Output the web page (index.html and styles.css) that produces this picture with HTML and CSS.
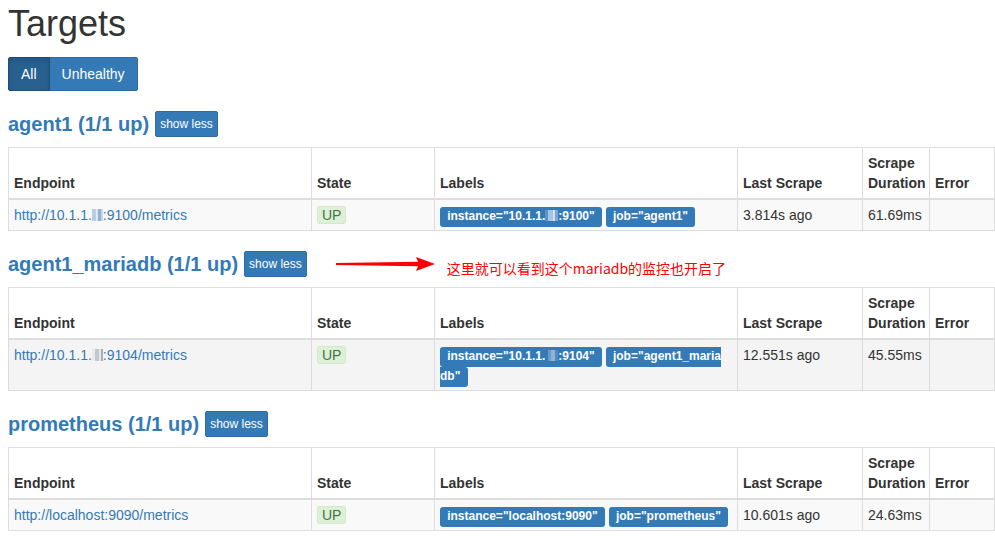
FILE: index.html
```html
<!DOCTYPE html>
<html lang="en">
<head>
<meta charset="utf-8">
<title>Targets</title>
<link rel="stylesheet" href="styles.css">
</head>
<body>
<div class="page">
  <h1 class="title">Targets</h1>
  <div class="filter">
    <button class="btn btn-first active">All</button><button class="btn btn-last">Unhealthy</button>
  </div>

  <section class="job">
    <div class="job-head">
      <h2 class="job-title">agent1 (1/1 up)</h2>
      <button class="btn-sm">show less</button>
    </div>
    <table class="targets">
      <colgroup><col class="c-end"><col class="c-state"><col class="c-labels"><col class="c-last"><col class="c-dur"><col></colgroup>
      <thead>
        <tr><th>Endpoint</th><th>State</th><th>Labels</th><th>Last Scrape</th><th>Scrape Duration</th><th>Error</th></tr>
      </thead>
      <tbody>
        <tr>
          <td><a class="ep" href="#">http://10.1.1.<span class="blur blur-ep"></span>:9100/metrics</a></td>
          <td><span class="up">UP</span></td>
          <td><span class="label">instance="10.1.1.<span class="blur blur-l"></span>:9100"</span> <span class="label">job="agent1"</span></td>
          <td>3.814s ago</td>
          <td>61.69ms</td>
          <td></td>
        </tr>
      </tbody>
    </table>
  </section>

  <section class="job">
    <div class="job-head">
      <h2 class="job-title">agent1_mariadb (1/1 up)</h2>
      <button class="btn-sm">show less</button>
      <svg class="arrow" width="100" height="16" viewBox="0 0 100 16"><path d="M0 7 L82 5.8 L80 1 L99 8 L80 15 L82 10.2 L0 9 Z" fill="#ff0000"/></svg>
      <span class="note">这里就可以看到这个mariadb的监控也开启了</span>
    </div>
    <table class="targets">
      <colgroup><col class="c-end"><col class="c-state"><col class="c-labels"><col class="c-last"><col class="c-dur"><col></colgroup>
      <thead>
        <tr><th>Endpoint</th><th>State</th><th>Labels</th><th>Last Scrape</th><th>Scrape Duration</th><th>Error</th></tr>
      </thead>
      <tbody>
        <tr class="hover">
          <td><a class="ep" href="#">http://10.1.1.<span class="blur blur-ep2"></span>:9104/metrics</a></td>
          <td><span class="up">UP</span></td>
          <td><span class="label">instance="10.1.1.<span class="blur blur-l2"></span>:9104"</span> <span class="label wrap">job="agent1_maria<wbr>db"</span></td>
          <td>12.551s ago</td>
          <td>45.55ms</td>
          <td></td>
        </tr>
      </tbody>
    </table>
  </section>

  <section class="job">
    <div class="job-head">
      <h2 class="job-title">prometheus (1/1 up)</h2>
      <button class="btn-sm">show less</button>
    </div>
    <table class="targets">
      <colgroup><col class="c-end"><col class="c-state"><col class="c-labels"><col class="c-last"><col class="c-dur"><col></colgroup>
      <thead>
        <tr><th>Endpoint</th><th>State</th><th>Labels</th><th>Last Scrape</th><th>Scrape Duration</th><th>Error</th></tr>
      </thead>
      <tbody>
        <tr>
          <td><a class="ep" href="#">http://localhost:9090/metrics</a></td>
          <td><span class="up">UP</span></td>
          <td><span class="label">instance="localhost:9090"</span> <span class="label">job="prometheus"</span></td>
          <td>10.601s ago</td>
          <td>24.63ms</td>
          <td></td>
        </tr>
      </tbody>
    </table>
  </section>
</div>
</body>
</html>
```

FILE: styles.css
```css
html {
  overflow: hidden;
}

body {
  margin: 0;
  font-family: "Liberation Sans", Arial, sans-serif;
  font-size: 14px;
  line-height: 20px;
  color: #333;
  background: #fff;
}

.page {
  padding-left: 8px;
}

.title {
  font-size: 36px;
  font-weight: 400;
  line-height: 40px;
  margin: 4px 0 13px;
  color: #333;
}

.filter {
  display: flex;
}

.btn {
  font-family: "Liberation Sans", Arial, sans-serif;
  font-size: 14px;
  line-height: 20px;
  padding: 6px 12px;
  border: 1px solid #2e6da4;
  background: #337ab7;
  color: #fff;
  margin: 0;
}

.btn-first {
  border-radius: 2px 0 0 2px;
}

.btn-last {
  border-radius: 0 2px 2px 0;
  margin-left: -1px;
}

.btn.active {
  background: #286090;
  border-color: #204d74;
  box-shadow: inset 0 3px 5px rgba(0, 0, 0, 0.125);
  position: relative;
  z-index: 1;
}

.job-head {
  display: flex;
  align-items: center;
  gap: 6px;
  height: 26px;
  margin: 20px 0 10px;
}

.job-title {
  margin: 0;
  font-size: 20px;
  font-weight: bold;
  line-height: 26px;
  color: #337ab7;
}

.btn-sm {
  font-family: "Liberation Sans", Arial, sans-serif;
  font-size: 12px;
  line-height: 18px;
  padding: 3px 4px;
  border: 1px solid #2e6da4;
  border-radius: 2px;
  background: #337ab7;
  color: #fff;
  margin: 0;
}

.arrow {
  display: block;
  margin-left: 23px;
  flex: none;
}

.note {
  margin-left: 5px;
  margin-top: 8px;
  font-family: "Noto Sans CJK SC", "Liberation Sans", sans-serif;
  font-size: 14px;
  line-height: 18px;
  color: #ff0000;
  white-space: nowrap;
}

.targets {
  border-collapse: collapse;
  table-layout: fixed;
  width: 987px;
  border: 1px solid #ddd;
}

.c-end { width: 303px; }
.c-state { width: 123px; }
.c-labels { width: 303px; }
.c-last { width: 125px; }
.c-dur { width: 67px; }

.targets th,
.targets td {
  border: 1px solid #ddd;
  padding: 5px;
  text-align: left;
  line-height: 20px;
}

.targets th {
  vertical-align: bottom;
  font-weight: bold;
  border-bottom-width: 2px;
}

.targets td {
  vertical-align: top;
}

.targets tbody tr {
  background: #f9f9f9;
}

.targets tbody tr.hover {
  background: #f4f4f4;
}

.ep {
  color: #337ab7;
  text-decoration: none;
}

.up {
  background: #dff0d8;
  color: #3c763d;
  border: 1px solid #d6e9c6;
  border-radius: 3px;
  padding: 0 4px;
}

.label {
  background: #337ab7;
  color: #fff;
  font-size: 12px;
  font-weight: bold;
  line-height: 1;
  padding: 0.2em 0.6em 0.3em;
  border-radius: 0.25em;
  white-space: nowrap;
}

.label.wrap {
  white-space: normal;
}

.blur {
  display: inline-block;
  height: 12px;
  vertical-align: -1px;
}

.blur-ep {
  width: 11px;
  background: linear-gradient(90deg, #b9cde2 0 35%, #dfe7f0 35% 55%, #8fb1d3 55% 80%, #c8d7e7 80%);
}

.blur-ep2 {
  width: 11px;
  background: linear-gradient(90deg, #e8eaed 0 30%, #c4c8cd 30% 60%, #e6e8ea 60% 80%, #a7adb4 80%);
}

.blur-l {
  width: 13px;
  height: 11px;
  background: linear-gradient(90deg, #5d95c8 0 25%, #a6c5e2 25% 60%, #cfe0ef 60% 80%, #7aa8d3 80%);
}

.blur-l2 {
  width: 13px;
  height: 11px;
  background: linear-gradient(90deg, #337ab7 0 20%, #6a9ccb 20% 50%, #8fb4d8 50% 75%, #4f8bc1 75%);
}
```
